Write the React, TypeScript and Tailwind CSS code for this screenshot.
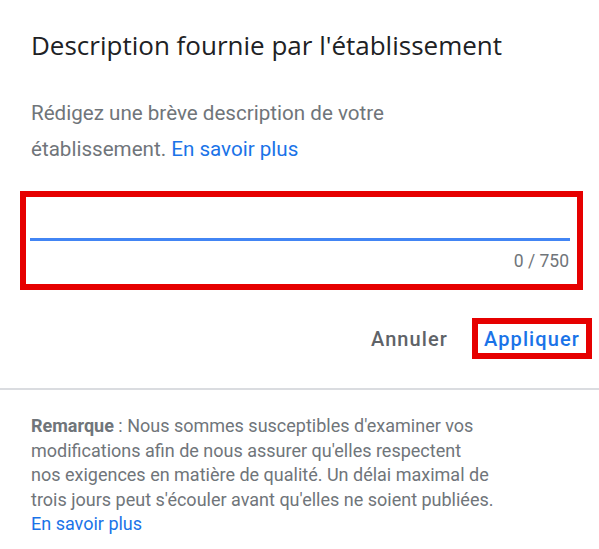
import React from "react";

export default function App() {
  return (
    <div className="w-[599px] h-[549px] bg-white overflow-hidden" style={{ fontFamily: "Roboto, 'Noto Sans', sans-serif" }}>
      <div className="pt-[29px] pl-[31px]">
        <h1 className="text-[26px] leading-[33px] text-[#202124] font-normal" style={{ fontFamily: "'Open Sans', Roboto, sans-serif" }}>
          Description fournie par l'établissement
        </h1>
      </div>
      <div className="pl-[31px] pr-[20px] mt-[33px]">
        <p className="text-[20.6px] leading-[36px] text-[#70757a]">
          Rédigez une brève description de votre
          <br />
          établissement. <span className="text-[#1a73e8]">En savoir plus</span>
        </p>
      </div>
      <div className="mx-[20px] w-[563px] mt-[24px] border-[6px] border-[#e60000] h-[99px] pl-[4px] pr-[7px]">
        <div className="h-[44px] border-b-[3px] border-[#4285f4]"></div>
        <div className="flex justify-end pt-[10px] pr-[1px] text-[17.5px] leading-[20px] text-[#70757a]">0 / 750</div>
      </div>
      <div className="flex justify-end items-center mt-[28px] pr-[7px]">
        <span className="text-[20px] font-medium text-[#5f6368] mr-[24px] tracking-[1.1px]">Annuler</span>
        <div className="w-[120px] h-[41px] border-[6px] border-[#e60000] flex items-center justify-center">
          <span className="text-[20px] font-medium text-[#1a73e8] tracking-[1.1px]">Appliquer</span>
        </div>
      </div>
      <div className="mt-[29px] h-[2px] bg-[#dadce0] w-full"></div>
      <div className="pl-[31px] pr-[20px] pt-[24px] text-[18px] leading-[24.5px] text-[#70757a]">
        <span className="font-bold">Remarque</span> : Nous sommes susceptibles d'examiner vos
        <br />
        modifications afin de nous assurer qu'elles respectent
        <br />
        nos exigences en matière de qualité. Un délai maximal de
        <br />
        trois jours peut s'écouler avant qu'elles ne soient publiées.
        <br />
        <span className="text-[#1a73e8]">En savoir plus</span>
      </div>
    </div>
  );
}
